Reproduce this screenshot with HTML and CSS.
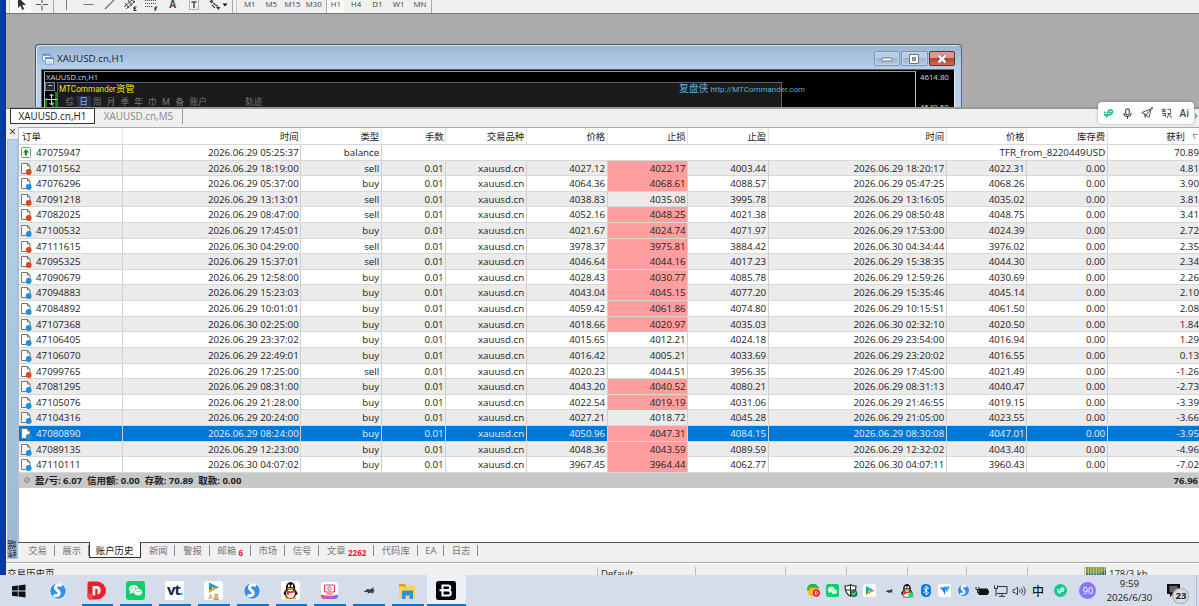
FILE: index.html
```html
<!DOCTYPE html>
<html lang="zh-CN">
<head>
  <meta charset="UTF-8">
  <title>账户历史</title>
  <link rel="stylesheet" href="styles.css">
</head>
<body>

<div class="app">
  <div class="toolbar">
    <i class="grip"></i>
    <span class="tool on"><svg width="14" height="14" viewBox="0 0 14 14"><path d="M4 0v11l2.500-2.300L8.200 13l2-1-1.900-4H12z" fill="#333"/></svg></span>
    <span class="tool"><svg width="14" height="14" viewBox="0 0 14 14"><path d="M7 1v5M7 8.500v5M1 7.500h5M8 7.500h5" stroke="#555" stroke-width="1.100"/></svg></span>
    <i class="sep"></i>
    <span class="tool"><svg width="14" height="14" viewBox="0 0 14 14"><path d="M7.500 0v13" stroke="#777"/></svg></span>
    <span class="tool"><svg width="14" height="14" viewBox="0 0 14 14"><path d="M2.500 7.500h10" stroke="#777"/></svg></span>
    <span class="tool"><svg width="14" height="14" viewBox="0 0 14 14"><path d="M3 12L13 2" stroke="#666" stroke-width="1.100"/></svg></span>
    <span class="tool"><svg width="14" height="14" viewBox="0 0 14 14"><path d="M1 10L10 2M3 12l9-8M2 6l4 5M5 3l4 6M9 1l2 5" stroke="#444" fill="none"/><path d="M13.500 10H11v3.500h2.500M11 11.700h2" stroke="#222" fill="none"/></svg></span>
    <span class="tool"><svg width="14" height="14" viewBox="0 0 14 14"><path d="M1 3.500h11M1 6.500h11M1 9.500h8" stroke="#555" stroke-dasharray="1.200 .8"/><path d="M13.500 10H11v4M11 12h2" stroke="#222" fill="none"/></svg></span>
    <span class="tool letter">A</span>
    <span class="tool"><svg width="14" height="14" viewBox="0 0 14 14"><rect x="2.500" y="2.500" width="9" height="10" fill="none" stroke="#777" stroke-dasharray="1 1"/><path d="M4.500 5h5M7 5v6" stroke="#444" stroke-width="1.400"/></svg></span>
    <span class="tool arrows"><svg width="20" height="14" viewBox="0 0 20 14"><path d="M1.500 4.500l2-2 2 2-2 2z" fill="#444"/><path d="M5 6l5 3.500M4 8l3 3" fill="none" stroke="#444" stroke-width="1.200"/><path d="M8 10h4.500l-2.200 3z" fill="#333"/><path d="M14.500 6.500h5l-2.500 3z" fill="#111"/></svg></span>
    <i class="grip second"></i>
    <span class="tf">M1</span><span class="tf">M5</span><span class="tf">M15</span><span class="tf">M30</span><span class="tf on">H1</span><span class="tf">H4</span><span class="tf">D1</span><span class="tf">W1</span><span class="tf">MN</span>
    <i class="sep"></i>
  </div>

  <div class="mdi">
    <div class="chart-window">
      <div class="titlebar">
        <svg width="12" height="12" viewBox="0 0 12 12"><rect x=".5" y="1" width="8" height="7" fill="#e8f2fd" stroke="#6a9fdb"/><path d="M1 2h7" stroke="#4f8bd0" stroke-width="1.500"/><rect x="3.500" y="4.500" width="8" height="6.500" fill="#fff" stroke="#6a9fdb"/><path d="M4 5.500h7" stroke="#4f8bd0" stroke-width="1.500"/><path d="M5 9.500l1.500-1.500L8 9.500 10 8" stroke="#88b4e4" fill="none"/></svg>
        <span>XAUUSD.cn,H1</span>
        <div class="win-buttons">
          <button><svg width="12" height="10" viewBox="0 0 12 10"><rect x="1" y="4" width="10" height="3" rx=".8" fill="#fff" stroke="#777"/></svg></button>
          <button><svg width="12" height="10" viewBox="0 0 12 10"><path d="M1.500 .500h9v9h-9zM4.500 3.500v3h3v-3z" fill="#fff" fill-rule="evenodd" stroke="#777"/></svg></button>
          <button class="close"><svg width="12" height="10" viewBox="0 0 12 10"><path d="M2.500 1.500l7 7M9.500 1.500l-7 7" stroke="#67403c" stroke-width="3.800"/><path d="M2.500 1.500l7 7M9.500 1.500l-7 7" stroke="#fff" stroke-width="2.500"/></svg></button>
        </div>
      </div>
      <div class="chart">
        <div class="plot">
          <div class="symbol">XAUUSD.cn,H1</div>
          <div class="panel-row">
            <div class="panel-side">
              <span class="collapse">−</span>
              <svg width="13" height="20" viewBox="0 0 13 20"><path d="M1 20V7M11 20V1M8 20v-9M4 20v-4" stroke="#18a818" stroke-width="1.500"/><path d="M6.500 3v11M1 8.500h11M4.500 5l2-2 2 2M4.500 12l2 2 2-2" stroke="#ddd" fill="none"/></svg>
            </div>
            <div class="panel">
              <div class="panel-title">MTCommander<b>资管</b></div>
              <div class="periods"><span>综</span><span class="on">日</span><span>周</span><span>月</span><span>季</span><span>年</span><span>巾</span><span>M</span><span>备</span><span class="wide">账户</span><span>轨迹</span></div>
              <div class="link"><b>复盘侠</b> http://MTCommander.com</div>
            </div>
          </div>
        </div>
        <div class="scale"><div>4614.80</div><div>4540.50</div></div>
      </div>
    </div>
  </div>

  <div class="chart-tabs">
    <span class="tab active">XAUUSD.cn,H1</span>
    <span class="tab">XAUUSD.cn,M5</span>
  </div>

  <div class="terminal">
    <div class="side">
      <span class="x">×</span>
      <div class="side-title"><span>终端</span></div>
    </div>
    <div class="content">
      <div class="history">
        <div class="row head">
          <span>订单</span><span>时间</span><span>类型</span><span>手数</span><span>交易品种</span><span>价格</span><span>止损</span><span>止盈</span><span>时间</span><span>价格</span><span>库存费</span><span>获利<svg width="6" height="6" viewBox="0 0 6 6"><path d="M5.500 .500H1L3 5" fill="none" stroke="#888"/></svg></span>
        </div>
        <div class="row balance">
          <span><svg class="doc" width="12" height="13" viewBox="0 0 12 13"><rect x="1.500" y="1.500" width="9" height="10" rx="1" fill="#fff" stroke="#888"/><path d="M6 3L2.800 6.500h1.900V9.500h2.600v-3h1.900z" fill="#159a1c"/></svg>47075947</span><span>2026.06.29 05:25:37</span><span>balance</span><span class="comment">TFR_from_8220449USD</span><span>70.89</span>
        </div>
        <div id="orders"></div>
        <div class="summary"><i></i><span>盈/亏: 6.07&nbsp; 信用额: 0.00&nbsp; 存款: 70.89&nbsp; 取款: 0.00</span><span class="total">76.96</span></div>
      </div>
      <div class="bottom-tabs">
        <span>交易</span><span>展示</span><span class="active">账户历史</span><span>新闻</span><span>警报</span><span>邮箱<b>6</b></span><span>市场</span><span>信号</span><span>文章<b>2262</b></span><span>代码库</span><span>EA</span><span>日志</span>
      </div>
    </div>
  </div>

  <div class="statusbar">
    <span class="hint">交易历史页</span><span class="profile">Default</span><span class="c90"></span><span class="c61"></span><span class="c61"></span><span class="c59"></span><span class="c61"></span><span class="c57"></span>
    <span class="traffic"><svg width="20" height="12" viewBox="0 0 20 12"><path d="M0 6h20" stroke="#1f6f80" stroke-width="12"/><path d="M0 0h20v3q-8 6-20 3z" fill="#7e9c22"/><path d="M2.300 0v12M5 0v12M7.700 0v12M10.400 0v12M13.100 0v12M15.800 0v12M18.500 0v12" stroke="#eee" stroke-width=".6"/></svg>178/3 kb</span>
  </div>
</div>

<div class="float-bar">
  <svg width="11" height="11" viewBox="0 0 12 12"><path d="M1 7.500h5.500C10.500 7.500 12 2 8 2 5.500 2 5 5 4 10.500M.8 5h2.500M6.500 5h2.800" fill="none" stroke="#16c784" stroke-width="1.700"/></svg>
  <svg width="11" height="11" viewBox="0 0 12 12"><rect x="4" y="1" width="4" height="6.500" rx="2" fill="none" stroke="#444" stroke-width="1.200"/><path d="M2 5.500c0 5 8 5 8 0M6 9.300V12" fill="none" stroke="#444" stroke-width="1.200"/></svg>
  <svg width="12" height="12" viewBox="0 0 12 12"><path d="M.8 5.500L10 2 8 10.500 5 8zM10 2L5 8l-.8 2.500-.7-4" fill="none" stroke="#555"/><circle cx="11" cy="1.200" r="1.200" fill="#ee3b3b"/></svg>
  <svg width="11" height="11" viewBox="0 0 12 12"><path d="M.500 2h5M3 .500v3M.800 4h4.500M1.500 6h3.500v3.500M1.500 8h3M7 1.500h3.500v3.500M6.500 11l2.500-5 2.500 5M7 6h4" fill="none" stroke="#444"/></svg>
  <span>Ai</span>
</div>
<span class="tab-next"></span>

<div class="taskbar">
  <span class="app-icon"><svg width="14" height="14" viewBox="0 0 14 14"><path d="M0 2.300l5.800-.8v5.100H0zM6.500 1.400L13.500.400v6.200h-7zM0 7.400h5.800v5.100L0 11.700zM6.500 7.400h7v6.200l-7-1z" fill="#111"/></svg></span>
  <span class="app-icon"><svg width="18" height="18" viewBox="0 0 18 18"><use href="#sogou"/></svg></span>
  <span class="app-icon run"><svg width="19" height="19" viewBox="0 0 19 19"><path d="M2.500 .500H10a9 9 0 010 18H3a2.500 2.500 0 01-2.500-2.500V2.500a2 2 0 012-2z" fill="#e8202c"/><path d="M5.500 5H10c5 0 5 8.500 .5 8.500V8H8.300v6.500H5.500z" fill="#e6e4ee"/><path d="M.500 12.500H5.500V18.500H3A2.500 2.500 0 01.500 16z" fill="#f04a50"/></svg></span>
  <span class="app-icon run"><svg width="19" height="19" viewBox="0 0 18 18"><use href="#wechat"/></svg></span>
  <span class="app-icon run"><span class="vt">vt<i>.</i></span></span>
  <span class="app-icon run"><svg width="19" height="19" viewBox="0 0 19 19"><rect width="19" height="19" rx="3" fill="#fff"/><path d="M5 1.500v10l3-1.500V6z" fill="#18ad44"/><path d="M5 1.500l10 4.800-3 1.700-7-3z" fill="#17a3e8"/><path d="M15 6.300l-10 5.500V9l7-3z" fill="#ff9d1b"/><text x="9.500" y="18" text-anchor="middle" font-size="5.500" font-weight="bold" fill="#b2722d">人品</text></svg></span>
  <span class="app-icon run"><svg width="18" height="18" viewBox="0 0 18 18"><use href="#sogou"/></svg></span>
  <span class="app-icon run"><svg width="19" height="19" viewBox="0 0 18 18"><rect width="18" height="18" rx="3" fill="#fff"/><use href="#qq"/></svg></span>
  <span class="app-icon run"><svg width="17" height="17" viewBox="0 0 17 17"><defs><linearGradient id="g"><stop stop-color="#ff4b6b"/><stop offset="1" stop-color="#6877ff"/></linearGradient></defs><rect width="17" height="17" rx="3" fill="#fff"/><path d="M0 12.500q8.500 2.500 17 0v1.500q0 3-3 3H3q-3 0-3-3z" fill="url(#g)"/><rect x="3.500" y="3" width="10" height="7" rx="1" fill="none" stroke="#e53655" stroke-width="1.200"/><circle cx="8.500" cy="6.500" r="1.700" fill="none" stroke="#e53655"/><path d="M5.500 12h6" stroke="#e53655"/></svg></span>
  <span class="app-icon run"><svg width="12" height="9" viewBox="0 0 12 9"><use href="#bird"/></svg></span>
  <span class="app-icon run"><svg width="18" height="16" viewBox="0 0 18 16"><path d="M1 1h6l1.500 2H17v12H1z" fill="#ffd05a"/><path d="M1 1h6l1.500 2.500H1z" fill="#e29b13"/><path d="M4 16V8.500q0-1 1-1h9q1 0 1 1V16h-3.500v-3.500h-4V16z" fill="#338fd8"/></svg></span>
  <span class="app-icon run current"><svg width="20" height="19" viewBox="0 0 20 19"><rect width="20" height="19" rx="2.500" fill="#050505"/><path d="M6.500 4.500h5.500c3 0 3 4.500 0 4.500H6.500M6.500 9.500h6c3 0 3 5 0 5H6.500zM6.500 3.600v11.800M3.500 9.300H8" fill="none" stroke="#fff" stroke-width="2"/></svg></span>

  <div class="tray">
    <span><svg width="13" height="13" viewBox="0 0 13 13"><path d="M0 6a6 6 0 0112-1H7a3 3 0 00-4 2z" fill="#2eb454"/><path d="M0 6.500a6 6 0 006 6V9a3 3 0 01-3-2.500z" fill="#f6bd18"/><path d="M2.500 5.500h8" stroke="#f6bd18" stroke-width="3.500"/><circle cx="9.300" cy="9" r="3.700" fill="#e42a32"/><path d="M8.500 7.500v3c3 0 3-3 0-3" fill="none" stroke="#fff" stroke-width=".8"/></svg></span>
    <span><svg width="13" height="13" viewBox="0 0 18 18"><use href="#wechat" width="18" height="18"/></svg></span>
    <span><svg width="14" height="13" viewBox="0 0 14 13"><path d="M6.500 .700C4.500 2 3 2 1 2c0 5 1 8 5.500 10.300C11 10 12 7 12 2 10 2 8.500 2 6.500.700z" fill="#fff" stroke="#222" stroke-width="1.100"/><path d="M6.500 1v11M1 6h11" stroke="#222"/><circle cx="10" cy="9.500" r="3.500" fill="#168447"/><path d="M8.300 9.500l1.200 1.200 2-2.200" stroke="#fff" fill="none"/></svg></span>
    <span><svg width="13" height="13" viewBox="0 0 13 13"><rect width="13" height="13" rx="2.500" fill="#fff"/><path d="M3 2v9l2.500-2V5z" fill="#1bae4a"/><path d="M3 2l8.500 4.500L9 8 3 4.500z" fill="#1ba7e8"/><path d="M11.500 6.500L3 11.300 5 8l4-2z" fill="#ff961b"/></svg></span>
    <span><svg width="8" height="6" viewBox="0 0 12 9"><use href="#bird" width="12" height="9"/></svg></span>
    <span><svg width="14" height="14" viewBox="1 1 16 16"><use href="#qq" width="18" height="18"/><circle cx="13.500" cy="13.500" r="3" fill="#27d17c"/></svg></span>
    <span><svg width="10" height="13" viewBox="0 0 10 13"><rect width="10" height="13" rx="4.500" fill="#0a7be8"/><path d="M2.500 4l5 5-2.500 2V2l2.500 2-5 5" fill="none" stroke="#fff"/></svg></span>
    <span><svg width="13" height="13" viewBox="0 0 13 13"><rect width="13" height="13" rx="2" fill="#fff"/><path d="M1.500 3.500H7v7.500L4.500 6z" fill="#1b6ff3"/><path d="M5.500 2.500H12L8.500 8.500 7 5z" fill="#25b4e9"/></svg></span>
    <span><svg width="13" height="13" viewBox="0 0 18 18"><use href="#sogou" width="18" height="18"/></svg></span>
    <span><svg width="14" height="10" viewBox="0 0 14 10"><path d="M4 3h8.500v5.500H4z" fill="#111" stroke="#111"/><path d="M13 4.500h1v3h-1z" fill="#111"/><path d="M1 1v2.500h3V1M2.500 4v3H5" stroke="#222" fill="none"/></svg></span>
    <span><svg width="14" height="12" viewBox="0 0 14 12"><path d="M3.500 1.500h9.500v7H3M8 8.500V11M5 11.300h6M2 4v7M.500 .500v3h3v-3" fill="none" stroke="#333"/></svg></span>
    <span><svg width="14" height="12" viewBox="0 0 14 12"><path d="M1 4.500h2l2.500-2.500v8L3 7.500H1zM7.500 4.500q1 1.500 0 3M9.500 3q2.200 3 0 6M11.500 1.500q3.300 4.500 0 9" fill="none" stroke="#444"/></svg></span>
    <span class="ime">中</span>
    <span class="assistant"><svg width="13" height="13" viewBox="0 0 13 13"><circle cx="6.500" cy="6.500" r="6.500" fill="#14c68a"/><path d="M3 7.800h4.200c3 0 3.600-4 1-4-1.700 0-2 2-2.700 6M3 5.700h2M7 5.700h2" fill="none" stroke="#fff" stroke-width="1.200"/></svg></span>
    <span class="score">90</span>
    <div class="clock">9:59<br>2026/6/30</div>
    <div class="notice"><svg width="13" height="13" viewBox="0 0 13 13"><path d="M0 0h13v10H6l-3 3v-3H0z" fill="#111"/><path d="M2.500 3h8M2.500 5h8M2.500 7h5" stroke="#dde3ee" stroke-width=".8"/></svg><b>23</b></div>
    <i class="peek"></i>
  </div>
</div>

<svg class="defs" width="0" height="0">
  <symbol id="sogou" viewBox="0 0 18 18"><circle cx="9" cy="9" r="8.500" fill="#fff"/><circle cx="9" cy="9" r="7.800" fill="#3a8eea"/><path d="M13 3.500C7.500 1.500 4.500 5 8 8c4 3 2.500 6.500-3.500 5.500" fill="none" stroke="#fff" stroke-width="3"/></symbol>
  <symbol id="wechat" viewBox="0 0 18 18"><rect width="18" height="18" rx="3" fill="#0fd068"/><ellipse cx="7.300" cy="7.500" rx="4.500" ry="3.800" fill="#fff"/><path d="M4 10l-.5 2.500L6.500 11z" fill="#fff"/><ellipse cx="11.500" cy="10.700" rx="4" ry="3.300" fill="#fff" stroke="#0fd068" stroke-width=".7"/><path d="M5.500 6.500h1M8.500 6.500h1M10 10h1M12.500 10h1" stroke="#0fb85c"/></symbol>
  <symbol id="qq" viewBox="0 0 18 18"><ellipse cx="9" cy="6.500" rx="4.500" ry="5.500" fill="#111"/><path d="M4.500 8C2 11 2 13 3.500 13h11C16 13 16 11 13.500 8z" fill="#111"/><ellipse cx="9" cy="12" rx="4.700" ry="4.500" fill="#fff" stroke="#111"/><path d="M4.500 8.500q4.500 2.500 9 0v2q-4.500 2-9 0zM5.500 10h2v3h-2z" fill="#e52c2c"/><ellipse cx="7.500" cy="4.800" rx="1" ry="1.400" fill="#fff"/><ellipse cx="10.500" cy="4.800" rx="1" ry="1.400" fill="#fff"/><path d="M6 7h6l-3 1.500zM4 16h4v1H4zM10 16h4v1h-4z" fill="#f5a813" stroke="#f5a813" stroke-width=".7"/></symbol>
  <symbol id="bird" viewBox="0 0 12 9"><path d="M0 6q3-1 4-3l3 .5L11 1l-1 2.500 2 .5-1 1-1 2.500-2-1-3 1-.5-1.500z" fill="#3d3d3d"/></symbol>
</svg>

<script>
  // order, open time, type, open price, s/l, s/l hit, t/p, close time, close price, profit
  const orders = [
    ['47101562', '2026.06.29 18:19:00', 'sell', '4027.12', '4022.17', 1, '4003.44', '2026.06.29 18:20:17', '4022.31', '4.81'],
    ['47076296', '2026.06.29 05:37:00', 'buy', '4064.36', '4068.61', 1, '4088.57', '2026.06.29 05:47:25', '4068.26', '3.90'],
    ['47091218', '2026.06.29 13:13:01', 'sell', '4038.83', '4035.08', 0, '3995.78', '2026.06.29 13:16:05', '4035.02', '3.81'],
    ['47082025', '2026.06.29 08:47:00', 'sell', '4052.16', '4048.25', 1, '4021.38', '2026.06.29 08:50:48', '4048.75', '3.41'],
    ['47100532', '2026.06.29 17:45:01', 'buy', '4021.67', '4024.74', 1, '4071.97', '2026.06.29 17:53:00', '4024.39', '2.72'],
    ['47111615', '2026.06.30 04:29:00', 'sell', '3978.37', '3975.81', 1, '3884.42', '2026.06.30 04:34:44', '3976.02', '2.35'],
    ['47095325', '2026.06.29 15:37:01', 'sell', '4046.64', '4044.16', 1, '4017.23', '2026.06.29 15:38:35', '4044.30', '2.34'],
    ['47090679', '2026.06.29 12:58:00', 'buy', '4028.43', '4030.77', 1, '4085.78', '2026.06.29 12:59:26', '4030.69', '2.26'],
    ['47094883', '2026.06.29 15:23:03', 'buy', '4043.04', '4045.15', 1, '4077.20', '2026.06.29 15:35:46', '4045.14', '2.10'],
    ['47084892', '2026.06.29 10:01:01', 'buy', '4059.42', '4061.86', 1, '4074.80', '2026.06.29 10:15:51', '4061.50', '2.08'],
    ['47107368', '2026.06.30 02:25:00', 'buy', '4018.66', '4020.97', 1, '4035.03', '2026.06.30 02:32:10', '4020.50', '1.84'],
    ['47106405', '2026.06.29 23:37:02', 'buy', '4015.65', '4012.21', 0, '4024.18', '2026.06.29 23:54:00', '4016.94', '1.29'],
    ['47106070', '2026.06.29 22:49:01', 'buy', '4016.42', '4005.21', 0, '4033.69', '2026.06.29 23:20:02', '4016.55', '0.13'],
    ['47099765', '2026.06.29 17:25:00', 'sell', '4020.23', '4044.51', 0, '3956.35', '2026.06.29 17:45:00', '4021.49', '-1.26'],
    ['47081295', '2026.06.29 08:31:00', 'buy', '4043.20', '4040.52', 1, '4080.21', '2026.06.29 08:31:13', '4040.47', '-2.73'],
    ['47105076', '2026.06.29 21:28:00', 'buy', '4022.54', '4019.19', 1, '4031.06', '2026.06.29 21:46:55', '4019.15', '-3.39'],
    ['47104316', '2026.06.29 20:24:00', 'buy', '4027.21', '4018.72', 0, '4045.28', '2026.06.29 21:05:00', '4023.55', '-3.66'],
    ['47080890', '2026.06.29 08:24:00', 'buy', '4050.96', '4047.31', 1, '4084.15', '2026.06.29 08:30:08', '4047.01', '-3.95'],
    ['47089135', '2026.06.29 12:23:00', 'buy', '4048.36', '4043.59', 1, '4089.59', '2026.06.29 12:32:02', '4043.40', '-4.96'],
    ['47110111', '2026.06.30 04:07:02', 'buy', '3967.45', '3964.44', 1, '4062.77', '2026.06.30 04:07:11', '3960.43', '-7.02']
  ];
  const selected = '47080890';

  function docIcon(type) {
    const color = type === 'sell' ? '#e0441c' : '#1f8fdc';
    return `<svg class="doc" width="12" height="13" viewBox="0 0 12 13"><path d="M1.500 1.500h6l2.500 2.500v7.500h-8.500z" fill="#fff" stroke="#777"/><path d="M7.500 1.500V4H10" fill="none" stroke="#777"/><circle cx="8.700" cy="10" r="2.900" fill="${color}"/></svg>`;
  }

  document.getElementById('orders').innerHTML = orders.map(o => {
    const [id, opened, type, price, sl, hit, tp, closed, closePrice, profit] = o;
    return `<div class="row${id === selected ? ' selected' : ''}">
      <span>${docIcon(type)}${id}</span><span>${opened}</span><span>${type}</span><span>0.01</span><span>xauusd.cn</span>
      <span>${price}</span><span${hit ? ' class="hit"' : ''}>${sl}</span><span>${tp}</span><span>${closed}</span>
      <span>${closePrice}</span><span>0.00</span><span>${profit}</span>
    </div>`;
  }).join('');
</script>

</body>
</html>
```
FILE: styles.css
```css
* {
  box-sizing: border-box;
}

body {
  margin: 0;
  width: 1199px;
  height: 606px;
  overflow: hidden;
  position: relative;
  background: #0738a8;
  font-family: "Open Sans", "Noto Sans CJK SC", sans-serif;
  font-size: 9.75px;
  color: #222;
}

svg {
  display: block;
  flex: none;
}

.defs {
  position: absolute;
}

.app {
  margin-left: 6px;
  height: 575px;
  overflow: hidden;
  display: flex;
  flex-direction: column;
  background: #f0f0f0;
}

/* Toolbar */
.toolbar {
  flex: none;
  height: 14px;
  padding-left: 1px;
  display: flex;
  overflow: hidden;
  border-bottom: 1px solid #777;
}

.tool {
  width: 21.3px;
  height: 13px;
  flex: none;
  display: flex;
  justify-content: center;
}

.tool svg {
  margin-top: -3px;
}

.tool.on, .tf.on {
  background: #fafafa;
}

.letter {
  font-weight: bold;
  font-size: 10px;
  line-height: 9px;
  color: #444;
}

.arrows {
  width: 27.5px;
}

.grip {
  flex: none;
  width: 3px;
  border-right: 1px dotted #aaa;
}

.grip.second {
  width: 5px;
  border-left: 1px solid #aaa;
  margin-right: 2px;
}

.sep {
  flex: none;
  width: 3px;
  border-left: 1px solid #aaa;
}

.tf {
  flex: none;
  width: 21.3px;
  text-align: center;
  font-size: 7.8px;
  line-height: 9px;
  color: #444;
}

.tf.on {
  width: 18px;
  margin-left: 2px;
  margin-right: 1px;
  border-left: 1px solid #aaa;
}

/* Chart area */
.mdi {
  flex: none;
  height: 93px;
  overflow: hidden;
  padding: 30px 0 0 29px;
  background: #ababab;
}

.chart-window {
  width: 927px;
  height: 120px;
  padding: 0 6px 0 5px;
  border: 1px solid #4a5157;
  border-right-color: #2d7e91;
  border-radius: 4px 4px 0 0;
  background: linear-gradient(#9ab5d3, #b7d0eb 24px, #b7d0eb);
  box-shadow: inset 1px 1px 0 #dce9f6;
}

.titlebar {
  height: 24px;
  display: flex;
  align-items: center;
  gap: 3px;
  padding: 3px 0 0 1px;
  font-size: 9.8px;
}

.win-buttons {
  margin-left: auto;
  display: flex;
  gap: 1px;
}

.win-buttons button {
  width: 26.5px;
  height: 15px;
  padding: 0;
  display: flex;
  align-items: center;
  justify-content: center;
  border: 1px solid #7d95b1;
  border-radius: 2px;
  background: linear-gradient(#b8cee6 45%, #9ab6d4 50%, #b5cde6);
  box-shadow: inset 0 0 0 1px #c4d7eb;
}

.win-buttons .close {
  border-color: #65312b;
  background: linear-gradient(#dc9a8e 45%, #bd3f2a 50%, #cf6b55);
  box-shadow: none;
}

.chart {
  height: 90px;
  display: flex;
  background: #000;
  color: #ddd;
  border: 1px solid #5b6168;
  border-right: 1px solid #eee;
  padding: 1px 0 0 2px;
}

.plot {
  width: 872px;
  border-top: 1px solid #999;
  border-right: 1px solid #bbb;
  border-left: 1px solid #bbb;
  font-family: Roboto, "Noto Sans CJK SC", sans-serif;
}

.symbol {
  height: 10px;
  padding-left: 1px;
  font: 7.6px/11px "Open Sans", sans-serif;
}

.panel-row {
  display: flex;
}

.panel-side {
  width: 12px;
}

.collapse {
  display: block;
  width: 10px;
  height: 9px;
  border: 1px solid #7d8ba5;
  background: #222b3a;
  line-height: 6px;
  text-align: center;
}

.panel {
  position: relative;
  width: 725px;
  height: 60px;
  border: 1px solid #596171;
  background: #1b1b1b;
}

.panel-title {
  padding-left: 1px;
  font-size: 8.2px;
  line-height: 13px;
  color: #e6e600;
}

.panel-title b {
  font-weight: normal;
  font-size: 9.4px;
  line-height: 1;
}

.periods {
  display: flex;
  padding-left: 5px;
  font-size: 8.6px;
  line-height: 12px;
  color: #777;
}

.periods span {
  width: 13.75px;
  text-align: center;
  white-space: nowrap;
}

.periods .on {
  background: #22324a;
  color: #a0b4cc;
}

.periods .wide {
  width: 57px;
  text-align: left;
  padding-left: 3px;
}

.periods .wide + span {
  width: 20px;
}

/* the address runs past the right edge of the panel */
.link {
  position: absolute;
  left: 621px;
  top: 0;
  font-size: 8px;
  line-height: 13px;
  white-space: nowrap;
  color: #64acd8;
}

.link b {
  font-weight: normal;
  font-size: 9.8px;
  line-height: 1;
}

.scale {
  padding-left: 4px;
  font-size: 7.8px;
  line-height: 10px;
}

.scale div {
  margin-top: 1px;
  height: 29px;
}

/* Chart tabs */
.chart-tabs {
  flex: none;
  height: 18px;
  display: flex;
  padding-left: 4px;
  border-top: 2px solid #999;
  font-size: 9.9px;
  line-height: 15px;
}

.chart-tabs .tab {
  height: 15px;
  width: 88px;
  text-align: center;
  color: #888;
  border-right: 1px solid #999;
}

.chart-tabs .active {
  width: 85px;
  margin-top: -1px;
  height: 16px;
  line-height: 15px;
  color: #222;
  background: #fff;
  border: 1px solid #333;
}

/* Terminal */
.terminal {
  flex: none;
  height: 438px;
  display: flex;
  border-bottom: 1px solid #aaa;
}

.side {
  width: 12px;
  padding: 2px 0 3px 1px;
  display: flex;
  flex-direction: column;
}

.x {
  height: 12px;
  line-height: 9px;
  font-size: 12px;
  text-align: center;
}

.side-title {
  flex: 1;
  display: flex;
  align-items: flex-end;
  background: linear-gradient(#b9d1eb, #9db8d6);
  border: 1px solid #a6bed8;
}

.side-title span {
  writing-mode: vertical-rl;
  transform: rotate(180deg);
  line-height: 9px;
  font-size: 9.2px;
}

.content {
  flex: 1;
  margin-top: 2px;
  display: flex;
  flex-direction: column;
  min-width: 0;
}

.history {
  height: 415px;
  background: #fff;
  border-top: 1px solid #aaa;
  border-left: 1px solid #bbb;
}

.row {
  display: grid;
  grid-template-columns: 104px 178px 80.5px 64.5px 80.5px 81px 80.5px 80.5px 178px 80.5px 80.5px 91.5px;
  height: 15.62px;
  line-height: 15px;
  border-bottom: 1px solid #d8d8d8;
}

.row > span {
  text-align: right;
  padding-right: 1.3px;
  border-right: 1px solid #d0d0d0;
  white-space: nowrap;
}

.row > span:first-child {
  display: flex;
  align-items: center;
  gap: 4px;
  padding-left: 1px;
}

.row > span:last-child {
  padding-right: 0;
  border-right: none;
}

.row.head {
  height: 17px;
  line-height: 17px;
  font-size: 9.4px;
}

.row.head > span {
  border-color: #e4e4e4;
}

.row.head > span:first-child {
  padding-left: 3px;
}

.row.head > span:last-child {
  display: flex;
  justify-content: flex-end;
  align-items: center;
  gap: 7px;
  padding-right: 1px;
}

.row .comment {
  grid-column: 4 / 12;
}

#orders .row:nth-child(odd) {
  background: #ebebeb;
}

#orders .row.selected {
  background: #0078d7;
  color: #e3f1ff;
}

.row .hit {
  background: #ff9e9e;
  color: #222;
}

.summary {
  height: 15px;
  display: flex;
  align-items: center;
  padding: 0 1px 0 5px;
  background: #c8c8c8;
  font-size: 9.5px;
  font-weight: bold;
}

.summary i {
  width: 6px;
  height: 6px;
  margin-right: 5px;
  border: 1px solid #888;
  border-radius: 50%;
  background: linear-gradient(135deg, transparent 42%, #888 43%, #888 57%, transparent 58%);
}

.total {
  margin-left: auto;
}

.bottom-tabs {
  height: 18px;
  display: flex;
  border-top: 1px solid #555;
  padding: 2px 0 0 2.5px;
  font-size: 9.4px;
  line-height: 11px;
  color: #777;
}

.bottom-tabs span {
  position: relative;
  padding: 0 7.7px;
  white-space: nowrap;
}

.bottom-tabs span::after {
  content: "";
  position: absolute;
  right: 0;
  top: 0;
  height: 11px;
  border-right: 1px solid #888;
}

.bottom-tabs span.active {
  margin-top: -3px;
  height: 16px;
  padding: 3px 7px 0 6px;
  background: #fff;
  color: #111;
  border: 1px solid #333;
  border-top: none;
}

.bottom-tabs .active::after {
  display: none;
}

.bottom-tabs b {
  margin-left: 2.5px;
  font-size: 8px;
  line-height: 1;
  color: #f01420;
  vertical-align: -2px;
}

/* Status bar, its lower half is under the taskbar */
.statusbar {
  flex: none;
  height: 20px;
  padding-top: 3px;
  display: flex;
  border-top: 1px solid #fff;
  font-size: 9.5px;
  line-height: 13px;
}

.statusbar span {
  border-right: 1px solid #bbb;
}

.statusbar .hint {
  width: 592px;
  padding-left: 1px;
}

.statusbar .profile {
  width: 98px;
  padding-left: 3px;
}

.c90 { width: 90px; }
.c61 { width: 61px; }
.c59 { width: 59px; }
.c57 { width: 57px; }

.statusbar .traffic {
  display: flex;
  gap: 3px;
  padding-left: 1px;
  border: none;
}

/* Floating assistant bar */
.float-bar {
  position: absolute;
  left: 1098px;
  top: 102px;
  width: 96px;
  height: 22px;
  padding: 0 5px;
  display: flex;
  align-items: center;
  justify-content: space-between;
  border-radius: 4px;
  background: #fff;
  box-shadow: 0 0 3px rgba(0, 0, 0, 0.3);
  font-size: 10px;
  font-weight: 600;
  color: #444;
}

.tab-next {
  position: absolute;
  left: 1195px;
  top: 113px;
  border: 3px solid transparent;
  border-left-color: #999;
  border-right: none;
}

/* Taskbar */
.taskbar {
  height: 31px;
  display: flex;
  background: #d6ddea;
}

.app-icon {
  flex: none;
  width: 38.8px;
  height: 31px;
  display: flex;
  align-items: center;
  justify-content: center;
  position: relative;
}

.app-icon.run::after {
  content: "";
  position: absolute;
  left: 4px;
  right: 3px;
  bottom: 0;
  height: 2px;
  background: #0b74cc;
}

.app-icon.current {
  background: #edf1f7;
}

.app-icon.current::after {
  left: 0;
  right: 0;
}

.vt {
  width: 19px;
  height: 19px;
  background: #fff;
  color: #14214a;
  font: bold 15px/17px "Open Sans", sans-serif;
  letter-spacing: -1px;
  text-align: center;
}

.vt i {
  color: #11b9cf;
  font-style: normal;
  margin-left: -1px;
}

.tray {
  margin-left: auto;
  width: 394.5px;
  flex: none;
  display: flex;
  align-items: center;
}

.tray > span {
  flex: none;
  width: 18.7px;
  display: flex;
  justify-content: center;
}

.ime {
  font-size: 12px;
  font-weight: 500;
  color: #111;
}

.tray .assistant {
  width: 26px;
}

.tray .score {
  width: 17px;
  height: 17px;
  margin-left: 6px;
  border-radius: 50%;
  background: #8c75fb;
  color: #fff;
  font-size: 9px;
  line-height: 17px;
}

.clock {
  width: 64px;
  margin-left: 1px;
  text-align: center;
  font-size: 9.7px;
  line-height: 14px;
}

.notice {
  position: relative;
  margin-left: 6px;
}

.notice b {
  position: absolute;
  left: 5px;
  top: 4px;
  width: 17px;
  height: 16px;
  border: 1px solid #aaa;
  border-radius: 50%;
  background: #d8dbe2;
  font-size: 9.5px;
  line-height: 14px;
  text-align: center;
}

.peek {
  margin-left: auto;
  width: 3px;
  height: 31px;
  border-left: 1px solid #b4bac6;
}
```
